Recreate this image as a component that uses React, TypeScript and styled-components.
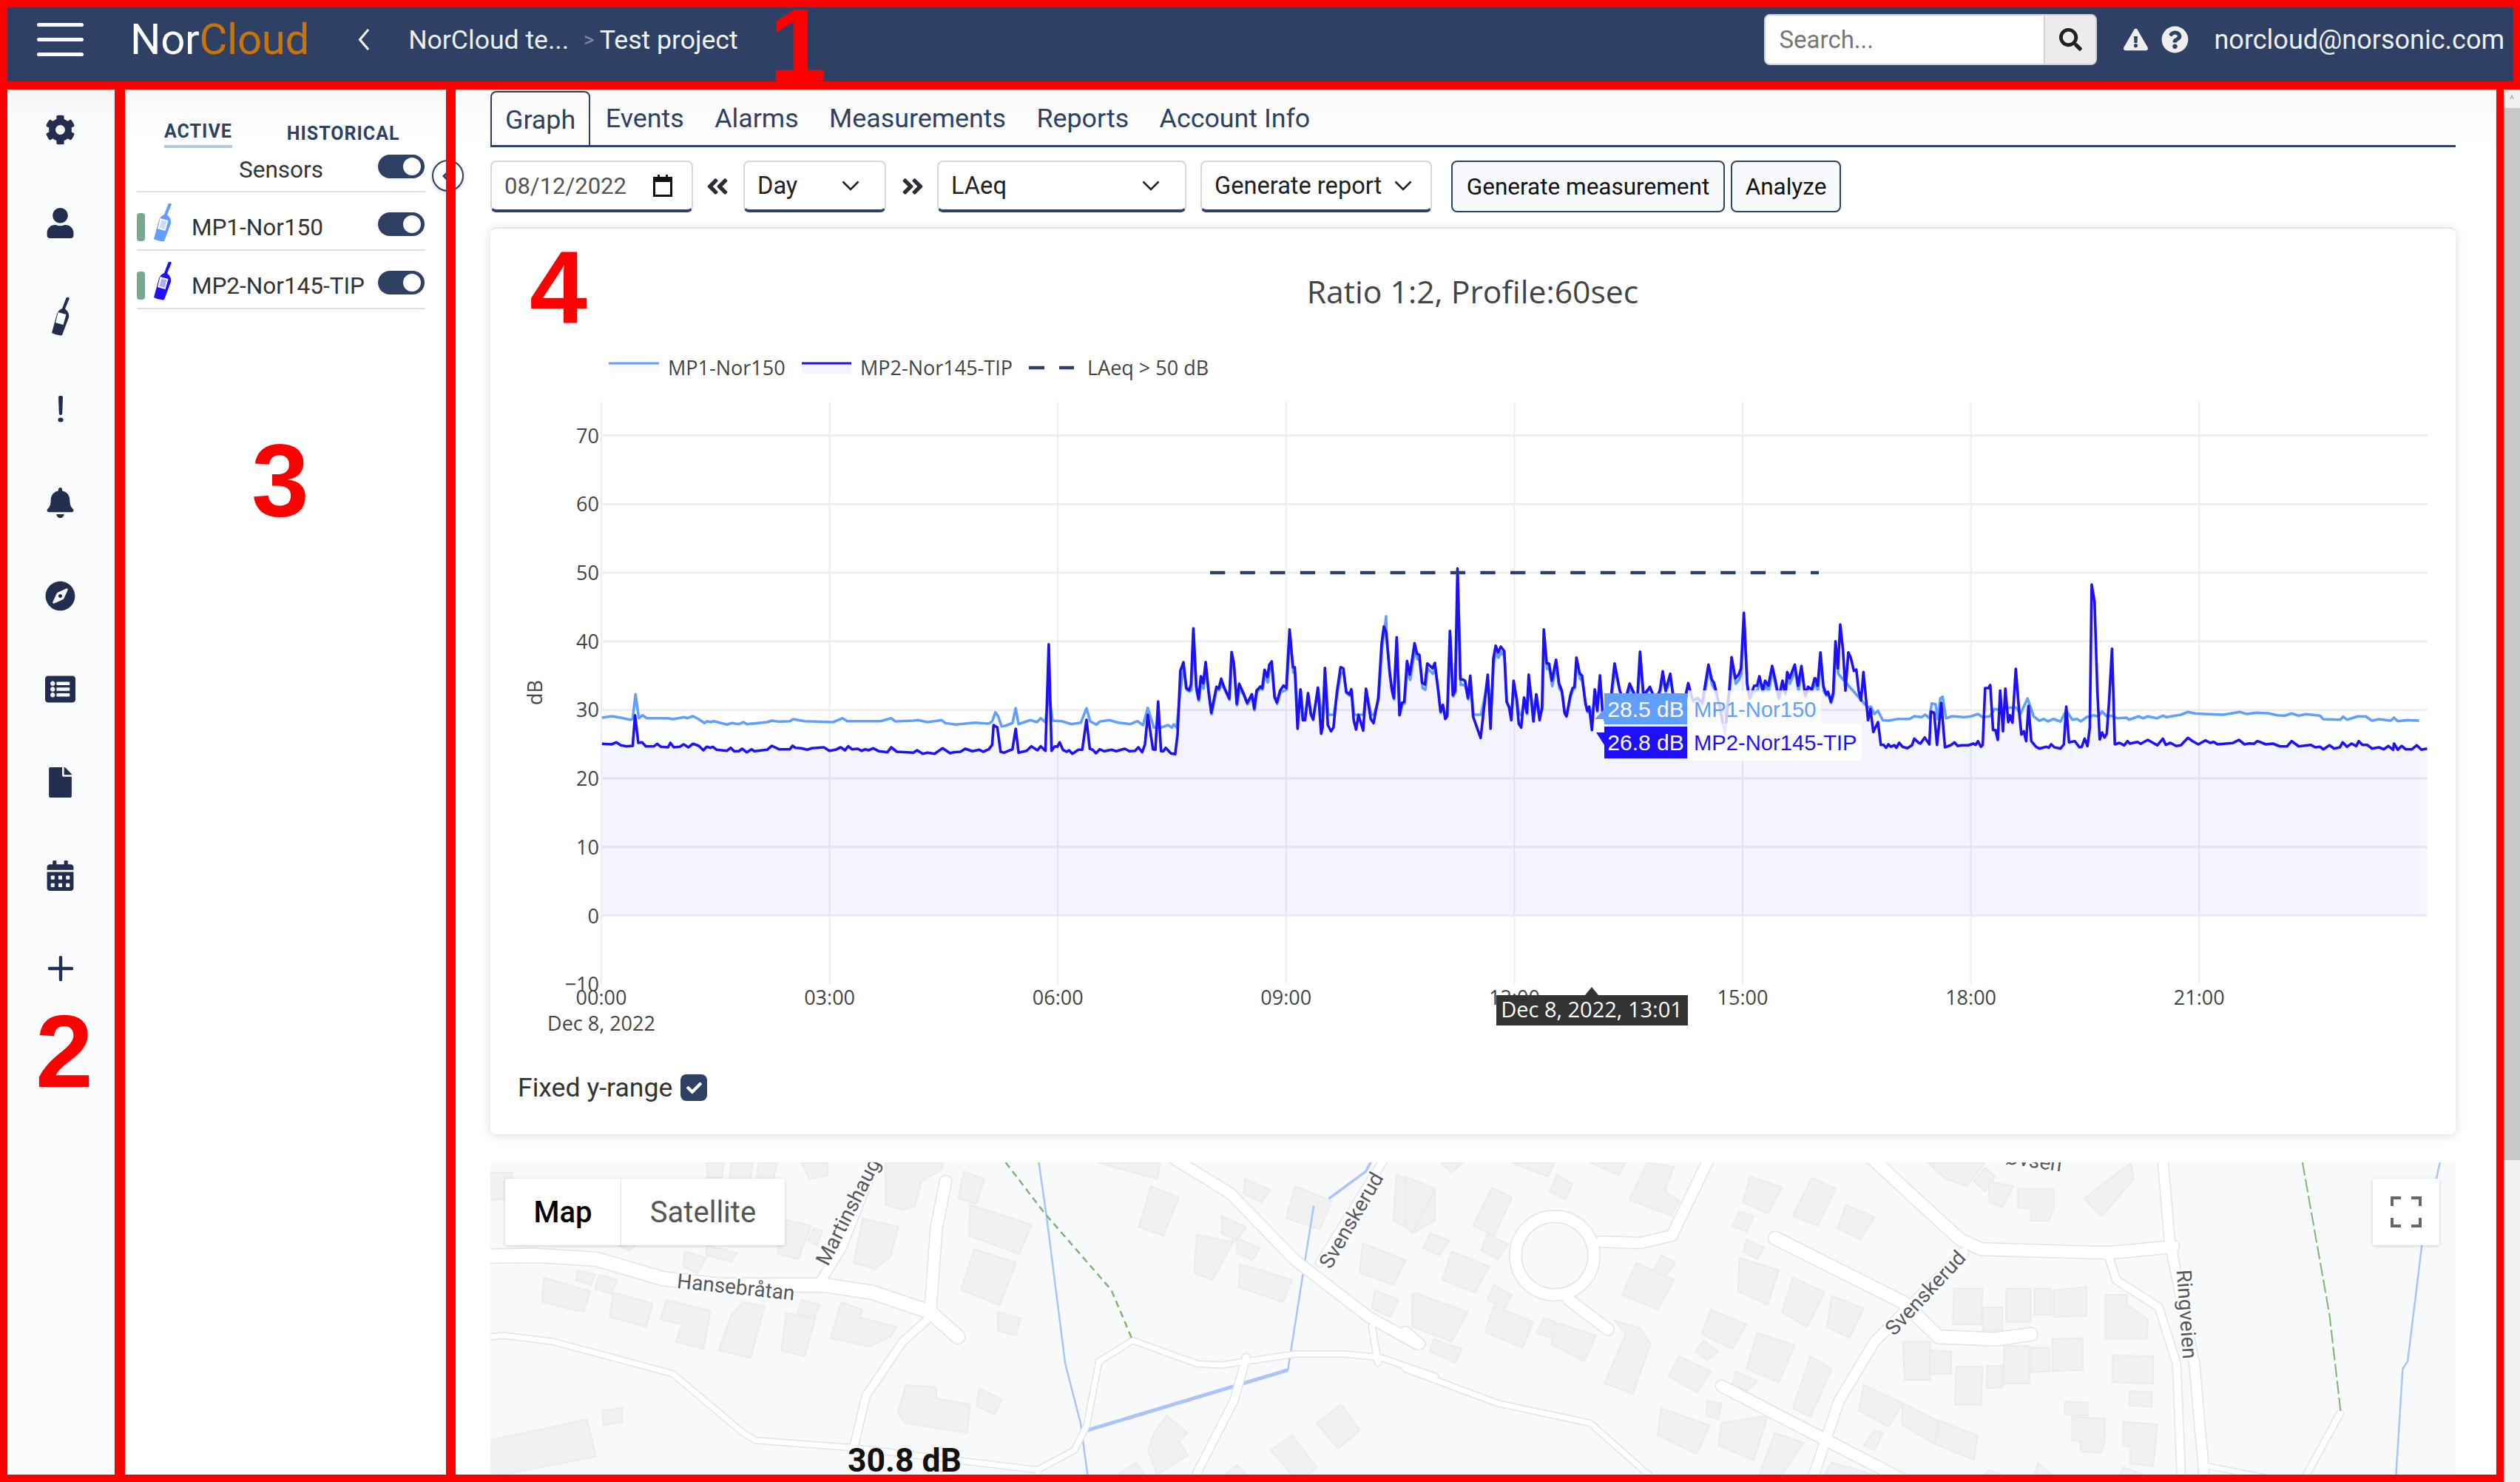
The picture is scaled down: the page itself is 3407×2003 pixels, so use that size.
import React from "react";
import styled, { createGlobalStyle } from "styled-components";
import {
  FaCog, FaUser, FaBell, FaCompass, FaListAlt, FaFile, FaCalendarAlt,
  FaSearch, FaExclamationTriangle, FaQuestionCircle, FaAngleDoubleLeft, FaAngleDoubleRight, FaCheck,
} from "react-icons/fa";

const NAVY = "#2e4164";
const ICON = "#222e50";
const L1 = "#619fff";
const L2 = "#1f0fff";

const Global = createGlobalStyle`
  html, body { margin: 0; padding: 0; background: #fff; }
  body { font-family: Roboto, "Liberation Sans", sans-serif; }
  * { box-sizing: border-box; }
`;

const Page = styled.div`
  position: relative; width: 3407px; height: 2003px; overflow: hidden;
  display: grid; grid-template-rows: 121px 1fr; background: #fff;
`;
const Header = styled.header`
  background: ${NAVY}; display: flex; align-items: center; padding: 0 21px 14px 50px; color: #f0f0f0;
`;
const Burger = styled.div`
  width: 63px; display: flex; flex-direction: column; gap: 15px;
  & > span { display: block; height: 5px; border-radius: 3px; background: #fff; }
`;
const Logo = styled.div`
  margin-left: 63px; font-size: 58.2px; color: #fff; letter-spacing: -0.3px; line-height: 1;
  & > span { color: #c8740a; }
`;
const BackIcon = styled.svg`margin-left: 66px; width: 16px; height: 31px;`;
const Crumb = styled.span`
  margin-left: 52px; font-size: 35.6px; color: #ededed; white-space: nowrap;
`;
const CrumbSep = styled.span`
  margin: 0 7px 0 20px; font-size: 28px; color: #7f8a9e;
`;
const CrumbLast = styled.span`font-size: 35.6px; color: #f2f2f2; white-space: nowrap;`;
const HeaderRight = styled.div`margin-left: auto; display: flex; align-items: center;`;
const Search = styled.div`
  width: 450px; height: 69px; display: flex; background: #fff; border: 2px solid #ced2d8; border-radius: 8px; overflow: hidden;
`;
const SearchInput = styled.div`
  flex: 1; font-size: 33px; color: #777; padding-left: 18px; display: flex; align-items: center;
`;
const SearchBtn = styled.div`
  width: 70px; background: #ececec; border-left: 2px solid #d0d3da; display: flex; align-items: center; justify-content: center; color: #222;
  font-size: 31px;
`;
const HeaderIcon = styled.span<{ $ml: number; $size: number }>`
  margin-left: ${(p) => p.$ml}px; font-size: ${(p) => p.$size}px; color: #eee; display: flex;
`;
const Email = styled.span`margin-left: 34px; font-size: 36px; color: #eee; white-space: nowrap;`;

const Body = styled.div`display: flex; min-height: 0;`;
const Sidebar = styled.nav`
  width: 169px; flex: none; background: linear-gradient(#f4f4f5, #fafbfd 40px);
  display: flex; flex-direction: column; align-items: center; gap: 84px; padding: 33px 6px 0 0; color: ${ICON};
`;
const SideItem = styled.div`
  height: 42px; display: flex; align-items: center; justify-content: center; font-size: 41px; color: ${ICON};
`;
const SideMeter = styled.svg`width: 70px; height: 70px; flex: none; transform: translate(-5px, 5px);`;
const Panel = styled.aside`
  position: relative; width: 447px; flex: none; padding: 38px 41px 0 16px;
  background: linear-gradient(#f8f8f8, #fff 70px);
`;
const PanelTabs = styled.div`display: flex; padding-left: 37px; gap: 74px; height: 41px;`;
const PanelTab = styled.div<{ $active?: boolean }>`
  font-size: 25px; font-weight: 700; color: ${NAVY}; letter-spacing: 1px; height: 41px; white-space: nowrap;
  padding-top: ${(p) => (p.$active ? 4 : 7)}px;
  border-bottom: ${(p) => (p.$active ? "4px solid #b4c6e0" : "none")};
`;
const SensorsHeader = styled.div`
  height: 60px; display: grid; grid-template-columns: 1fr auto 1fr; align-items: center;
  border-bottom: 2px solid #dde1e6; color: #333; font-size: 31.5px;
`;
const SensorsLabel = styled.span`grid-column: 2;`;
const Toggle = styled.span`
  display: block; width: 63px; height: 32px; border-radius: 16px; background: ${NAVY}; position: relative;
  &::after { content: ""; position: absolute; right: 5px; top: 4px; width: 24px; height: 24px; border-radius: 50%; background: #fff; }
`;
const HeaderToggle = styled(Toggle)`justify-self: end; margin-bottom: 9px; margin-right: 1px;`;
const SensorRow = styled.div`
  height: 79px; display: flex; align-items: center; border-bottom: 2px solid #dde1e6; color: #333; font-size: 31.5px;
`;
const StatusBar = styled.span`display: block; width: 11px; height: 38px; border-radius: 4px; background: #77a98e; margin-top: 16px;`;
const MeterSvg = styled.svg`width: 70px; height: 70px; flex: none; margin-top: 12px; margin-left: -16px;`;
const SensorName = styled.span`margin-left: 9px; margin-top: 17px; white-space: nowrap;`;
const RowToggle = styled(Toggle)`margin-left: auto; margin-right: 1px; margin-top: 8px;`;
const Collapse = styled.div`
  position: absolute; left: 415px; top: 95px; width: 43px; height: 43px; border-radius: 50%; background: #fff;
  border: 2px solid ${NAVY}; box-shadow: 0 1px 4px rgba(0,0,0,.25); display: flex; align-items: center; padding-left: 12px;
`;

const Main = styled.main`
  flex: 1; min-width: 0; padding: 2px 65px 0 47px; display: flex; flex-direction: column;
  background: linear-gradient(#f9f9f9, #fff 80px);
`;
const Tabs = styled.div`display: flex; height: 76px; border-bottom: 3px solid ${NAVY};`;
const TabItem = styled.div<{ $active?: boolean }>`
  padding: 0 ${(p) => (p.$active ? 18 : 18.7)}px; height: ${(p) => (p.$active ? "75px" : "72px")}; font-size: 35.8px; color: ${NAVY}; display: flex; align-items: center; white-space: nowrap;
  border: ${(p) => (p.$active ? `2px solid ${NAVY}` : "2px solid transparent")}; border-bottom: none;
  border-radius: 8px 8px 0 0;
`;
const Toolbar = styled.div`display: flex; align-items: center; margin-top: 18px; height: 70px;`;
const Field = styled.div<{ $w: number; $ml?: number; $pr?: number }>`
  width: ${(p) => p.$w}px; height: 70px; margin-left: ${(p) => p.$ml ?? 0}px; flex: none;
  display: flex; align-items: center; justify-content: space-between; padding: 0 ${(p) => p.$pr ?? 34}px 0 17px;
  border: 2px solid #d4d7dc; border-bottom: 4px solid ${NAVY}; border-radius: 8px; font-size: 32.6px; color: #222; background: #fff;
`;
const DateText = styled.span`color: #555; font-size: 31px;`;
const DoubleArrow = styled.span<{ $ml: number }>`
  margin-left: ${(p) => p.$ml}px; display: flex; font-size: 44px; color: #2a2f35; width: 30px; justify-content: center; flex: none;
`;
const Btn = styled.div<{ $w: number; $ml: number }>`
  width: ${(p) => p.$w}px; margin-left: ${(p) => p.$ml}px; height: 70px; flex: none; display: flex; align-items: center; justify-content: center;
  border: 2.5px solid ${NAVY}; border-radius: 8px; background: #f8f9fc; color: #111; font-size: 31.5px; white-space: nowrap;
`;
const Card = styled.section`
  margin-top: 20px; height: 1226px; background: #fff; border-radius: 8px; border-top: 2px solid #e4e4e4;
  box-shadow: 0 2px 14px rgba(0,0,0,.14); overflow: hidden;
`;
const ChartSvg = styled.svg`display: block; width: 2657px; height: 1110px;`;
const Tick = styled.text`font-family: "Open Sans", sans-serif; font-size: 27px; fill: #444;`;
const LegendText = styled(Tick)`font-size: 27px;`;
const Title = styled.text`font-family: "Open Sans", sans-serif; font-size: 42.7px; fill: #444;`;
const HoverVal = styled.text`font-family: "Liberation Sans", sans-serif; font-size: 30px; fill: #fff;`;
const HoverName = styled.text`font-family: "Liberation Sans", sans-serif; font-size: 29.2px;`;
const AxisTip = styled.text`font-family: "Open Sans", sans-serif; font-size: 29px; fill: #fff;`;
const FixedRow = styled.label`
  display: flex; align-items: flex-start; gap: 11px; padding: 33px 0 0 37px; font-size: 35.6px; color: #333; line-height: 36px;
`;
const Check = styled.span`
  width: 36px; height: 36px; border-radius: 8px; background: ${NAVY}; color: #fff; display: flex; align-items: center; justify-content: center; font-size: 21px;
`;
const MapBox = styled.section`
  position: relative; margin-top: 38px; height: 430px; flex: none; background: #f8f9fb; overflow: hidden;
`;
const MapSvg = styled.svg`display: block; width: 2657px; height: 430px;`;
const MapLabel = styled.text`
  font-family: Roboto, sans-serif; font-size: 28px; fill: #55585f; paint-order: stroke; stroke: #fff; stroke-width: 5px; stroke-linejoin: round;
`;
const MapTabs = styled.div`
  position: absolute; left: 20px; top: 22px; height: 90px; display: flex; background: #fff; border-radius: 3px; box-shadow: 0 1px 5px rgba(0,0,0,.18);
`;
const MapTab = styled.div<{ $active?: boolean; $w: number }>`
  width: ${(p) => p.$w}px; display: flex; align-items: center; justify-content: center; font-size: 40px;
  color: ${(p) => (p.$active ? "#000" : "#565656")}; font-weight: ${(p) => (p.$active ? 500 : 400)};
  border-right: ${(p) => (p.$active ? "1px solid #e6e6e6" : "none")};
`;
const FullBtn = styled.div`
  position: absolute; left: 2545px; top: 22px; width: 90px; height: 90px; background: #fff; border-radius: 3px; box-shadow: 0 1px 5px rgba(0,0,0,.18);
  display: flex; align-items: center; justify-content: center;
`;
const MapValue = styled.div`
  position: absolute; left: 483px; top: 378px; font-size: 44.5px; font-weight: 700; color: #111; white-space: nowrap; line-height: 50px;
`;
const Scrollbar = styled.div`
  width: 22px; flex: none; background: #f1f1f1; display: flex; flex-direction: column;
`;
const ScrollBtn = styled.div`
  height: 25px; background: #f1f1f1; color: #a6a6a6; font-size: 15px; display: flex; align-items: center; justify-content: center;
`;
const ScrollThumb = styled.div`height: 1422px; background: #c8c8c8;`;
const Frame = styled.div<{ $l: number; $t: number; $w: number; $h: number; $bl: number; $br: number; $bt: number; $bb: number }>`
  position: absolute; pointer-events: none; left: ${(p) => p.$l}px; top: ${(p) => p.$t}px; width: ${(p) => p.$w}px; height: ${(p) => p.$h}px;
  border-style: solid; border-color: #fe0000;
  border-width: ${(p) => `${p.$bt}px ${p.$br}px ${p.$bb}px ${p.$bl}px`};
`;
const Digit = styled.div<{ $l: number; $t: number }>`
  position: absolute; left: ${(p) => p.$l}px; top: ${(p) => p.$t}px; pointer-events: none;
  font-family: "Liberation Sans", sans-serif; font-weight: 700; font-size: 140px; line-height: 1; color: #fe0000;
`;

type P = [number, number];
const conv = (a: number[], x0: number, y0: number, fx = 1.568, fy = 3): P[] => {
  const out: P[] = [];
  for (let i = 0; i < a.length; i += 2) out.push([x0 + a[i] / fx, y0 + a[i + 1] / fy]);
  return out;
};
const str = (p: P[]) => p.map(([x, y]) => `${x.toFixed(1)},${y.toFixed(1)}`).join(" ");

const d5 = [210,856,230,858,240,850,250,862,262,866,275,864,280,740,287,852,295,850,303,866,320,866,327,856,335,868,350,870,355,852,362,870,375,868,383,858,393,870,403,856,415,864,425,882,432,868,440,872,445,868,453,880,475,884,483,872,490,886,500,886,507,876,517,890,527,878,533,886,560,880,570,864,585,878,608,878,614,864,620,872,632,874,645,880,655,874,680,870,692,884,705,880,716,870,725,882,732,866,740,878,752,876,760,884,768,878,775,882,785,874,797,886,815,890,823,870,835,888,870,892,878,882,890,896,900,892,915,896,932,874,948,894,955,890,970,888,980,876,995,886,1010,880,1018,888,1030,878,1037,860,1040,780,1048,790,1055,888,1062,892,1072,884,1080,878,1087,795,1093,892,1110,884,1120,866,1133,882,1140,866,1150,884,1157,452,1163,884,1170,866,1175,868,1180,850,1187,880,1195,888,1200,882,1207,896,1220,880,1228,880,1237,758,1244,876,1250,880,1257,894,1265,878,1275,886,1290,880,1300,886,1318,876,1328,886,1340,884,1347,870,1355,890,1361,858,1367,738,1378,878,1383,880,1389,684,1395,886,1400,886,1405,872,1416,895,1425,898,1430,820,1436,560];
const d6 = [0,525,6,630,12,638,16,615,21,388,27,620,32,675,37,582,42,610,47,524,53,640,59,730,70,625,75,632,80,592,87,630,97,672,102,484,107,530,113,694,118,612,127,650,135,690,145,655,150,714,155,640,163,624,167,630,172,556,178,585,182,535,187,522,193,665,198,688,205,640,212,620,218,630,225,392,232,545,236,545,242,795,248,635,253,760,258,760,264,650,270,735,275,758,285,628,292,815,295,790,300,548,306,780,313,805,318,790,325,650,333,545,339,550,345,645,352,655,356,635,361,760,366,798,371,738,381,802,387,632,397,755,403,772,413,670,420,450,425,380,430,405,437,560,442,640,446,670,452,424,458,740,463,690,468,686,474,520,480,575,490,448,495,490,500,495,506,608,512,615,517,530,523,540,528,550,533,528,540,640,545,725,550,698,555,755,559,745,565,398,571,658,576,640,581,145,587,595,592,595,597,600,603,670,608,580,614,745,630,832,645,575,651,795,657,510,662,458,667,485,673,462,680,480,685,685,690,705,695,760,700,600,706,670,711,775,716,790,722,668,728,730,732,575,742,765,748,655,755,760,760,710,764,392,770,530,775,530,781,600,790,515,796,610,802,640,808,730,812,745,820,660,825,630,829,625,833,506,840,570,845,580,852,690,856,722,860,705,866,800,872,635,877,720,883,578,889,750,905,690,914,530,925,640,935,690,946,612,955,650,962,680,968,482,975,660,989,625,1000,680,1010,640,1016,562,1022,640,1032,572,1040,690,1060,700,1070,610,1080,680,1090,670,1100,690,1113,535,1120,595,1125,610,1135,690,1148,815,1157,640,1162,505,1170,590,1177,575,1182,550,1188,325,1195,610,1200,670,1210,620,1216,620,1221,582,1228,640,1233,600,1240,620,1248,540,1255,600,1262,670,1270,600,1276,650,1280,565,1285,590,1296,535,1303,620,1310,540,1318,660,1324,625,1332,635,1338,590];
const d7 = [85,590,90,620,96,485,102,620,108,655,112,645,118,685,123,650,128,440,133,550,138,372,144,480,149,640,155,485,160,505,167,560,172,555,177,640,182,680,187,565,197,760,202,715,208,808,218,768,224,860,230,860,235,872,240,858,245,868,253,862,257,872,263,852,270,868,280,874,290,862,295,835,303,850,308,855,317,830,327,858,330,725,337,730,343,860,352,690,360,870,372,862,380,850,387,865,395,862,410,862,420,855,425,860,430,845,436,868,440,860,445,630,452,630,456,618,462,800,467,800,472,840,477,640,483,805,488,632,494,768,498,740,503,770,510,552,517,720,522,818,527,805,532,845,537,702,543,845,553,868,560,875,575,868,580,872,585,858,592,870,605,875,612,858,617,705,623,850,635,845,645,870,650,868,656,835,662,865,667,790,671,210,677,280,683,640,688,838,693,810,698,830,703,815,708,680,714,470,720,858,730,852,740,862,747,845,752,855,768,848,775,856,790,840,810,862,822,835,828,860,838,852,850,865,860,862,875,832,885,845,897,858,912,842,922,852,930,848,938,858,970,853,983,840,995,858,1005,854,1015,856,1022,845,1030,850,1040,858,1055,855,1070,866,1085,866,1095,845,1110,866,1135,860,1145,870,1155,868,1162,878,1175,862,1185,875,1197,870,1203,850,1212,868,1222,855,1232,865,1237,845,1245,860,1255,860,1265,875,1280,870,1290,878,1300,865,1310,880,1312,855,1320,880,1328,865,1337,878,1350,878,1360,862,1370,880,1382,875];
const l5 = [210,750,230,744,250,750,270,758,275,755,281,655,288,752,296,740,305,752,350,752,360,756,385,748,390,752,403,744,415,756,427,772,433,764,440,768,447,764,475,778,485,772,500,776,510,768,517,776,560,768,570,762,585,766,608,764,615,756,640,764,700,768,720,752,730,764,800,764,823,752,832,765,870,762,880,760,900,768,930,760,938,772,960,778,1000,770,1030,774,1037,765,1044,728,1050,745,1057,785,1066,782,1080,772,1087,712,1093,776,1118,760,1132,768,1140,752,1150,768,1157,640,1165,762,1185,764,1205,776,1225,770,1237,712,1245,765,1258,778,1265,766,1285,760,1305,770,1330,776,1345,764,1357,780,1367,710,1380,790,1395,790,1410,780,1418,790,1422,778,1428,790,1434,680,1440,580];
const l7 = [197,710,203,705,210,735,218,722,228,760,240,762,260,755,285,755,295,744,310,748,318,738,327,752,332,692,340,695,345,755,350,672,355,665,362,752,375,744,400,748,415,745,430,735,440,748,455,745,465,715,480,720,490,710,510,708,520,735,535,672,548,745,560,762,570,755,578,765,590,755,605,766,617,720,630,758,640,755,648,765,660,748,668,745,675,740,685,745,693,725,703,745,712,742,725,752,745,750,750,758,770,745,780,752,790,745,810,752,822,742,830,748,860,738,875,727,890,733,910,735,950,738,985,727,1000,735,1020,730,1045,732,1065,740,1080,742,1095,733,1110,742,1125,736,1155,742,1162,756,1198,758,1204,746,1212,758,1235,745,1252,745,1265,762,1280,756,1305,762,1312,750,1320,764,1340,760,1365,762];

const mp2: P[] = [...conv(d5, 680, 720), ...conv(d6, 1600, 720), ...conv(d7, 2400, 720)];
const midSource: P[] = [...conv(d6, 1600, 720), ...conv(d7.slice(0, 20), 2400, 720)];
const mid: P[] = midSource
  .map(([x, y]): P => {
    const zy = (y - 720) * 3;
    const adj = zy < 620 ? zy + 22 : zy > 735 ? 738 : zy + 6;
    return [x + 0.5, 720 + adj / 3];
  })
  .concat([[1874, 833]])
  .sort((a, b) => a[0] - b[0]);
const mp1: P[] = [...conv(l5, 680, 720), ...mid, ...conv(l7, 2400, 720)];
const area = (p: P[]) => `${p[0][0]},1237 ${str(p)} ${p[p.length - 1][0]},1237`;

const yTicks = [70, 60, 50, 40, 30, 20, 10, 0];
const yOf = (v: number) => 1237.5 - v * 9.27;
const xTicks = ["00:00", "03:00", "06:00", "09:00", "12:00", "15:00", "18:00", "21:00"];
const xOf = (i: number) => 813 + i * 308.6;

const METER_D =
  "M47.5 5.5 Q50 4 52 6 L46 20.5 Q52 25 51 32 L42 56 Q35 57 28 53 L35 27 Q37 22 42 20 Z M36.5 25 L47.5 28 L43.5 42 L33 39 Z";

const Meter = ({ color }: { color: string }) => (
  <MeterSvg viewBox="0 0 70 70">
    <path fill={color} fillRule="evenodd" d={METER_D} />
    <path fill={color} opacity=".35" d="M38.5 27.5 L45.5 29.5 L42.5 40 L35.5 37.5 Z" />
  </MeterSvg>
);

const Chevron = () => (
  <svg width="24" height="14" viewBox="0 0 24 14">
    <path d="M1.5 1.5 L12 12 L22.5 1.5" fill="none" stroke="#222" strokeWidth="2.6" />
  </svg>
);

const SideMeterIcon = () => (
  <SideMeter viewBox="0 0 70 70">
    <path fill={ICON} fillRule="evenodd" d={METER_D} />
  </SideMeter>
);
const BangIcon = () => (
  <svg width="8" height="36" viewBox="0 0 8 36">
    <path d="M1 2 Q1 0 3 0 H5 Q7 0 7 2 L6.2 24 Q6 26 4 26 Q2 26 1.8 24 Z" fill={ICON} />
    <ellipse cx="4" cy="32.5" rx="3.6" ry="3" fill={ICON} />
  </svg>
);
const PlusIcon = () => (
  <svg width="34" height="34" viewBox="0 0 34 34">
    <path d="M17 2 V32 M2 17 H32" stroke={ICON} strokeWidth="4.4" strokeLinecap="round" fill="none" />
  </svg>
);

// map geometry (coordinates as read from two crops of the map)
const m9 = (a: number[]) => conv(a, 640, 1560, 1.206, 3);
const m10 = (a: number[]) => conv(a, 1900, 1560, 1.0405, 3);

const b9 = [
  [27,75,63,75,63,180,27,185],[380,35,408,35,405,95,382,95],[420,35,455,35,452,100,418,100],[465,35,495,35,490,100,462,100],
  [535,35,578,35,578,85,548,100],[672,35,765,35,765,60,730,110,720,210,700,225,672,205],[800,70,833,100,820,200,790,180],
  [810,205,910,285,890,405,808,330],[817,385,885,440,858,612,795,550],[855,640,892,665,885,735,855,715],
  [1020,35,1120,35,1115,100,1085,80],[1105,130,1150,175,1125,330,1085,295],[1258,100,1300,145,1285,195,1256,160],
  [1340,130,1400,190,1380,305,1325,260],[1180,325,1225,350,1240,350,1205,510,1175,480],[1220,250,1260,295,1245,350,1220,320],
  [1245,340,1282,380,1270,430,1245,400],[1250,445,1335,510,1320,600,1248,540],[1450,360,1520,430,1500,530,1445,480],
  [1505,85,1568,150,1568,270,1535,315,1500,270],[1470,550,1508,590,1495,660,1465,625],[1530,570,1568,610,1568,680,1530,660],
  [635,260,693,295,680,415,655,465,620,440],[500,260,550,290,530,425,497,405],[345,395,380,420,365,482,342,455],
  [555,300,570,310,560,370,545,350],[115,500,190,555,180,640,112,600],[170,470,198,488,192,530,167,510],
  [205,490,235,510,225,565,198,545],[228,560,292,605,282,700,222,660],[315,590,387,635,375,790,330,760,340,690,305,670],
  [420,655,440,600,475,615,452,825,400,795],[510,645,558,660,540,820,502,795],[535,590,565,610,555,665,528,650],
  [600,600,635,630,630,660,690,700,680,740,645,780,582,745],[705,935,755,945,755,990,810,1015,805,1130,705,1090,692,1050],
  [825,950,862,995,850,1055,820,1020],[210,1040,243,1028,243,1085,212,1100],[27,1160,185,1075,200,1225,27,1310],
  [1130,1060,1165,1130,1150,1165,1165,1220,1115,1300,1100,1200,1110,1130],[1415,1015,1445,1120,1410,1195,1375,1090],
  [1335,1140,1375,1270,1345,1330,1300,1200],[1080,1250,1095,1300,1050,1300],[1245,1260,1260,1300,1225,1300],
  [380,370,430,400,420,435,380,410],[235,370,265,370,255,390],
];
const b10 = [
  [0,90,42,140,10,320,0,290],[122,135,150,175,125,330,95,290],[213,85,235,120,225,185,203,150],[340,35,378,50,365,150,385,190,375,250,315,185],
  [485,90,530,135,510,240,475,195],[572,95,605,140,580,290,545,250],[620,205,660,255,640,345,608,300],[35,320,62,350,48,410,25,380],
  [115,325,145,365,130,425,107,390],[65,395,118,455,98,560,52,510],[470,232,490,250,480,315,460,290],[480,345,505,380,495,425,475,395],
  [12,560,88,640,65,760,10,700],[125,530,150,570,140,625,115,590],[125,615,180,680,165,785,112,720],[195,665,212,680,205,745,185,725],
  [215,685,268,735,252,840,205,770],[360,410,380,440,365,495,350,470],[325,440,378,510,355,630,305,570],[470,420,525,470,510,610,468,555],
  [545,500,590,560,565,700,530,640],[600,575,645,625,625,745,593,700],[430,630,480,690,460,790,417,730],[495,725,548,775,525,925,480,870],
  [420,755,440,800,425,835,408,800],[385,820,430,880,410,965,370,900],[295,675,330,705,345,770,320,970,280,930,310,730],[40,750,80,790,70,845,35,800],
  [465,880,495,920,480,960,460,930],[570,820,600,870,570,1065,545,1030],[645,935,700,1010,680,1105,638,1040],[360,1030,428,1100,410,1215,355,1140],
  [700,1010,755,1090,745,1175,698,1095],[750,1080,805,1140,800,1240,745,1175],[445,1090,510,1060,490,1240,440,1180],[425,1000,445,1010,440,1075,423,1060],
  [520,1130,560,1170,530,1300,498,1300],[660,1120,672,1130,660,1200,645,1180],[600,1250,660,1300,590,1300],
  [772,545,812,545,810,690,770,690],[812,622,840,622,840,715,812,715],[845,545,880,545,880,680,845,680],[885,545,908,545,908,650,885,650],
  [912,552,958,538,958,655,912,660],[985,570,1015,570,1015,610,1045,670,1043,748,985,748],[700,760,738,760,738,915,702,915],[738,795,768,800,768,890,738,890],
  [775,862,812,862,810,1015,773,1015],[818,858,840,858,840,945,818,950],[842,778,878,778,878,930,842,930],[880,785,906,785,906,880,880,885],
  [910,750,953,745,953,875,910,880],[995,815,1052,820,1052,930,995,925],[1018,960,1050,965,1050,1025,1018,1018],[928,1002,960,1008,960,1060,928,1055],
  [938,1065,984,1072,984,1170,978,1210,950,1205,950,1165,938,1160],[1010,1085,1058,1095,1052,1265,1020,1255,1020,1185,1010,1180],
  [735,35,815,35,790,130,760,100],[820,110,855,130,840,215,822,195],[862,140,912,140,912,225,905,270,880,270,880,225,862,215],
  [955,180,1020,35,1025,100,980,250],[50,35,80,35,65,75],[150,35,210,35,200,90],[260,35,310,35,300,85],[815,55,830,90,815,150,800,110],
  [820,1280,840,1300,815,1300],[890,1250,910,1300,885,1300],[1010,1270,1040,1300,1005,1300],
];
const roads: { p: P[]; w: number }[] = [
  { p: m9([0,415,100,410,200,425,310,505,400,530,570,530,650,560,745,640,790,740]), w: 18 },
  { p: m9([770,110,755,300,745,640]), w: 15 },
  { p: m9([565,520,600,380,660,0]), w: 12 },
  { p: m9([745,660,700,760,640,980,620,1190]), w: 10 },
  { p: m9([27,740,50,735,130,760,325,890,440,1130,460,1160,620,1190,920,1280,980,1200,1000,1100,1020,840,1075,755,1180,850,1220,855,1340,810,1420,810,1480,825,1568,900]), w: 7 },
  { p: m9([1130,0,1235,160,1340,430,1460,660,1540,770]), w: 14 },
  { p: m9([1260,825,1240,1000,1170,1340]), w: 10 },
  { p: m9([1465,700,1475,845]), w: 8 },
  { p: m9([1490,0,1380,440]), w: 10 },
  { p: m9([920,1280,925,1340]), w: 7 },
  { p: m10([275,355,330,360,375,330,430,0]), w: 14 },
  { p: m10([230,590,285,710]), w: 15 },
  { p: m10([650,0,780,345,810,385,990,400,1080,375]), w: 16 },
  { p: m10([1065,0,1075,350,1110,850,1125,1340]), w: 13 },
  { p: m10([785,400,660,760,610,1000,570,1340]), w: 13 },
  { p: m10([520,340,700,600,750,740,830,750,880,730]), w: 17 },
  { p: m10([990,420,1000,510,1060,620,1085,850,1092,1340]), w: 10 },
  { p: m10([0,870,130,1010,260,1090,350,1320]), w: 7 },
  { p: m10([445,940,700,1320]), w: 15 },
  { p: m10([0,720,20,770]), w: 14 },
  { p: m10([1315,1050,1260,1340]), w: 8 },
  { p: m10([1130,1265,1210,1310]), w: 6 },
];
const rivers: { p: P[]; w: number }[] = [
  { p: m9([920,0,935,260,965,850,990,1090,1003,1330]), w: 2.5 },
  { p: m9([1000,1120,1328,875]), w: 5 },
  { p: m9([1328,875,1365,290,1370,210]), w: 2.5 },
  { p: m9([1395,180,1455,70,1470,0]), w: 3.5 },
  { p: m10([1458,0,1430,370,1410,840,1403,870,1393,1330]), w: 2.5 },
];

const menu = [FaCog, FaUser, SideMeterIcon, BangIcon, FaBell, FaCompass, FaListAlt, FaFile, FaCalendarAlt, PlusIcon];

export default function App() {
  return (
    <>
      <Global />
      <Page>
        <Header>
          <Burger><span /><span /><span /></Burger>
          <Logo>Nor<span>Cloud</span></Logo>
          <BackIcon viewBox="0 0 16 31"><path d="M14 2 L2.5 15.5 L14 29" fill="none" stroke="#fff" strokeWidth="3" /></BackIcon>
          <Crumb>NorCloud te...</Crumb>
          <CrumbSep>&gt;</CrumbSep>
          <CrumbLast>Test project</CrumbLast>
          <HeaderRight>
            <Search>
              <SearchInput>Search...</SearchInput>
              <SearchBtn><FaSearch /></SearchBtn>
            </Search>
            <HeaderIcon $ml={36} $size={33}><FaExclamationTriangle /></HeaderIcon>
            <HeaderIcon $ml={18} $size={37}><FaQuestionCircle /></HeaderIcon>
            <Email>norcloud@norsonic.com</Email>
          </HeaderRight>
        </Header>
        <Body>
          <Sidebar>
            {menu.map((Icon, i) => (
              <SideItem key={i}><Icon /></SideItem>
            ))}
          </Sidebar>
          <Panel>
            <PanelTabs>
              <PanelTab $active>ACTIVE</PanelTab>
              <PanelTab>HISTORICAL</PanelTab>
            </PanelTabs>
            <SensorsHeader>
              <SensorsLabel>Sensors</SensorsLabel>
              <HeaderToggle />
            </SensorsHeader>
            <SensorRow>
              <StatusBar />
              <Meter color={L1} />
              <SensorName>MP1-Nor150</SensorName>
              <RowToggle />
            </SensorRow>
            <SensorRow>
              <StatusBar />
              <Meter color={L2} />
              <SensorName>MP2-Nor145-TIP</SensorName>
              <RowToggle />
            </SensorRow>
            <Collapse>
              <svg width="12" height="20" viewBox="0 0 12 20"><path d="M10 2 L2 10 L10 18" fill="none" stroke={NAVY} strokeWidth="3" /></svg>
            </Collapse>
          </Panel>
          <Main>
            <Tabs>
              <TabItem $active>Graph</TabItem>
              <TabItem>Events</TabItem>
              <TabItem>Alarms</TabItem>
              <TabItem>Measurements</TabItem>
              <TabItem>Reports</TabItem>
              <TabItem>Account Info</TabItem>
            </Tabs>
            <Toolbar>
              <Field $w={274} $pr={26}>
                <DateText>08/12/2022</DateText>
                <svg width="26" height="30" viewBox="0 0 26 30">
                  <path d="M6 0 h3 v3 h8 v-3 h3 v3 h6 v27 h-26 v-27 h6 Z M3 10 v17 h20 v-17 Z" fill="#111" />
                </svg>
              </Field>
              <DoubleArrow $ml={18}><FaAngleDoubleLeft /></DoubleArrow>
              <Field $w={193} $ml={20}>Day<Chevron /></Field>
              <DoubleArrow $ml={21}><FaAngleDoubleRight /></DoubleArrow>
              <Field $w={337} $ml={18}>LAeq<Chevron /></Field>
              <Field $w={313} $ml={19} $pr={25}>Generate report<Chevron /></Field>
              <Btn $w={370} $ml={26}>Generate measurement</Btn>
              <Btn $w={149} $ml={8}>Analyze</Btn>
            </Toolbar>
            <Card>
              <ChartSvg viewBox="663 309 2657 1110">
                <Title x="1991" y="410" textAnchor="middle">Ratio 1:2, Profile:60sec</Title>

                <rect x="823" y="491" width="68" height="14" fill="#fafbff" />
                <line x1="823" x2="891" y1="491" y2="491" stroke={L1} strokeWidth="3" />
                <LegendText x="903" y="507">MP1-Nor150</LegendText>
                <rect x="1084" y="491" width="67" height="14" fill="#f4f4fe" />
                <line x1="1084" x2="1151" y1="491" y2="491" stroke={L2} strokeWidth="3" />
                <LegendText x="1163" y="507">MP2-Nor145-TIP</LegendText>
                <line x1="1391" x2="1452" y1="497" y2="497" stroke={NAVY} strokeWidth="4.5" strokeDasharray="21 20" />
                <LegendText x="1470" y="507">LAeq &gt; 50 dB</LegendText>

                {xTicks.map((_, i) => (
                  <line key={i} x1={xOf(i)} x2={xOf(i)} y1="543" y2="1330" stroke="#ebedf1" strokeWidth="2" />
                ))}
                {yTicks.map((v) => (
                  <line key={v} x1="813" x2="3282" y1={yOf(v)} y2={yOf(v)} stroke="#eeeeee" strokeWidth="3" />
                ))}

                <polygon points={area(mp1)} fill="rgba(97,159,255,.02)" />
                <polygon points={area(mp2)} fill="rgba(31,15,255,.04)" />
                <polyline points={str(mp1)} fill="none" stroke={L1} strokeWidth="3.6" strokeLinejoin="round" />
                <polyline points={str(mp2)} fill="none" stroke={L2} strokeWidth="3.6" strokeLinejoin="round" />
                <line x1="1636" x2="2459" y1="774" y2="774" stroke={NAVY} strokeWidth="4.5" strokeDasharray="20.3 20.3" />

                {yTicks.map((v) => (
                  <Tick key={v} x="810" y={yOf(v) + 10} textAnchor="end">{v}</Tick>
                ))}
                <Tick x="810" y="1340" textAnchor="end">−10</Tick>
                {xTicks.map((t, i) => (
                  <Tick key={t} x={xOf(i)} y="1358" textAnchor="middle">{t}</Tick>
                ))}
                <Tick x="813" y="1393" textAnchor="middle">Dec 8, 2022</Tick>
                <Tick x="0" y="0" textAnchor="middle" transform="translate(733 936) rotate(-90)" fontSize="30">dB</Tick>

                <rect x="2282" y="933" width="180" height="45" fill="#fff" opacity=".8" />
                <rect x="2282" y="978" width="235" height="50" fill="#fff" opacity=".9" />
                <polygon points="2169,958 2156,972 2169,975" fill={L1} />
                <rect x="2155" y="972" width="13" height="17" fill="#fff" />
                <polygon points="2158,990 2169,1007 2169,990" fill={L2} />
                <rect x="2169" y="937" width="112" height="42" fill={L1} />
                <rect x="2169" y="982" width="112" height="43" fill={L2} />
                <HoverVal x="2225" y="969" textAnchor="middle">28.5 dB</HoverVal>
                <HoverVal x="2225" y="1014" textAnchor="middle">26.8 dB</HoverVal>
                <HoverName x="2290" y="969" fill={L1}>MP1-Nor150</HoverName>
                <HoverName x="2290" y="1014" fill={L2}>MP2-Nor145-TIP</HoverName>

                <polygon points="2143,1345 2152,1334 2161,1345" fill="#333" />
                <rect x="2023" y="1345" width="259" height="41" fill="#333" />
                <AxisTip x="2152" y="1375" textAnchor="middle">Dec 8, 2022, 13:01</AxisTip>
              </ChartSvg>
              <FixedRow>Fixed y-range<Check><FaCheck /></Check></FixedRow>
            </Card>
            <MapBox>
              <MapSvg viewBox="663 1571 2657 430">
                {[...b9.map(m9), ...b10.map(m10)].map((b, i) => (
                  <polygon key={i} points={str(b)} fill="#f1f1f1" stroke="#ebebeb" strokeWidth="2" />
                ))}
                {rivers.map((r, i) => (
                  <polyline key={i} points={str(r.p)} fill="none" stroke="#aac4f9" strokeWidth={r.w} />
                ))}
                {roads.map((r, i) => (
                  <polyline key={i} points={str(r.p)} fill="none" stroke="#e1e4e8" strokeWidth={r.w + 3} strokeLinecap="round" strokeLinejoin="round" />
                ))}
                <circle cx="2102" cy="1697" r="53" fill="none" stroke="#e1e4e8" strokeWidth="18" />
                {roads.map((r, i) => (
                  <polyline key={i} points={str(r.p)} fill="none" stroke="#fff" strokeWidth={r.w} strokeLinecap="round" strokeLinejoin="round" />
                ))}
                <circle cx="2102" cy="1697" r="53" fill="none" stroke="#fff" strokeWidth="15" />
                <polyline points={str(m9([868,33,930,235,1040,550,1075,755]))} fill="none" stroke="#7fb571" strokeWidth="2.5" strokeDasharray="9 6" />
                <polyline points={str(m10([1262,33,1300,650,1316,1050]))} fill="none" stroke="#7fb571" strokeWidth="2" strokeDasharray="18 5" />
                <MapLabel x="0" y="0" textAnchor="middle" transform="translate(994 1749) rotate(6)" fontSize="26">Hansebråtan</MapLabel>
                <MapLabel x="0" y="0" textAnchor="middle" transform="translate(1155 1642) rotate(-63)">Martinshaug</MapLabel>
                <MapLabel x="0" y="0" textAnchor="middle" transform="translate(1835 1654) rotate(-60)">Svenskerud</MapLabel>
                <MapLabel x="0" y="0" textAnchor="middle" transform="translate(2610 1754) rotate(-47)">Svenskerud</MapLabel>
                <MapLabel x="0" y="0" textAnchor="middle" transform="translate(2947 1777) rotate(86)">Ringveien</MapLabel>
                <MapLabel x="0" y="0" textAnchor="middle" transform="translate(2748 1578) rotate(8)">Øvsen</MapLabel>
              </MapSvg>
              <MapTabs>
                <MapTab $active $w={157}>Map</MapTab>
                <MapTab $w={221}>Satellite</MapTab>
              </MapTabs>
              <FullBtn>
                <svg width="42" height="42" viewBox="0 0 42 42">
                  <path d="M0 0 h14 v4 h-10 v9 h-4 Z M42 0 h-14 v4 h10 v9 h4 Z M0 42 h14 v-4 h-10 v-9 h-4 Z M42 42 h-14 v-4 h10 v-9 h4 Z" fill="#666" />
                </svg>
              </FullBtn>
              <MapValue>30.8 dB</MapValue>
            </MapBox>
          </Main>
          <Scrollbar>
            <ScrollBtn>^</ScrollBtn>
            <ScrollThumb />
          </Scrollbar>
        </Body>

        <Frame $l={0} $t={0} $w={3407} $h={121} $bl={10} $br={9} $bt={10} $bb={11} />
        <Frame $l={0} $t={110} $w={169} $h={1893} $bl={10} $br={14} $bt={0} $bb={10} />
        <Frame $l={155} $t={110} $w={461} $h={1893} $bl={0} $br={13} $bt={0} $bb={10} />
        <Frame $l={603} $t={110} $w={2782} $h={1893} $bl={0} $br={10} $bt={0} $bb={10} />
        <Digit $l={1040} $t={-9}>1</Digit>
        <Digit $l={48} $t={1351}>2</Digit>
        <Digit $l={340} $t={579}>3</Digit>
        <Digit $l={716} $t={319}>4</Digit>
      </Page>
    </>
  );
}
